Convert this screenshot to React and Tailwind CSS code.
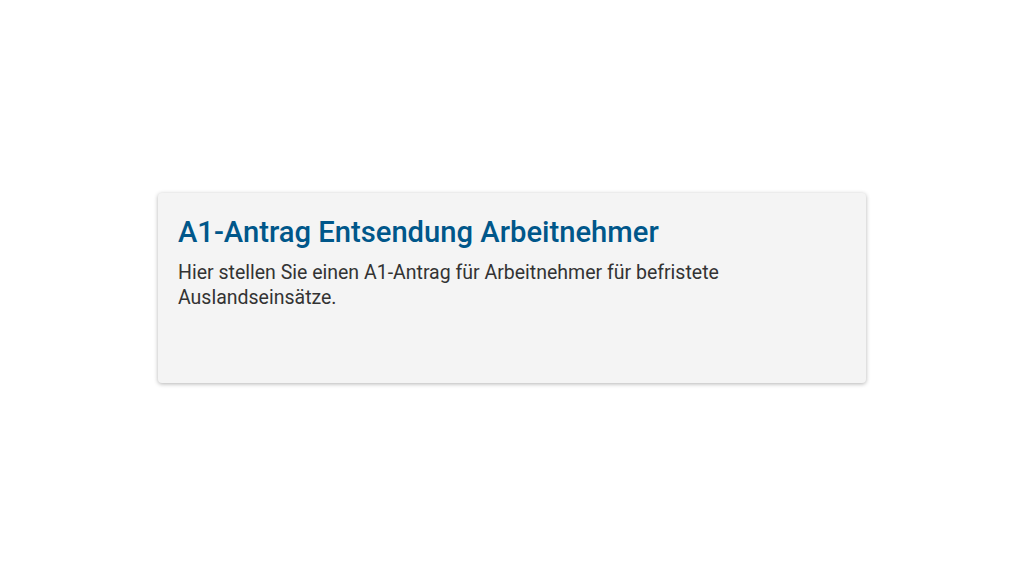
export default function App() {
  return (
    <div className="flex h-screen w-full items-center justify-center bg-white" style={{ fontFamily: 'Roboto, "Liberation Sans", sans-serif' }}>
      {/* Card */}
      <div className="h-[190px] w-[708px] rounded bg-[#f4f4f4] px-5 pt-[20px] shadow-[0_1px_4px_rgba(0,0,0,0.3)]">
        <h2 className="text-[29.2px] font-medium leading-[38px] text-[#00578a]">
          A1-Antrag Entsendung Arbeitnehmer
        </h2>
        <p className="mt-[9px] text-[19.5px] leading-[25px] text-[#333333]">
          Hier stellen Sie einen A1-Antrag für Arbeitnehmer für befristete
          <br />
          Auslandseinsätze.
        </p>
      </div>
    </div>
  );
}
